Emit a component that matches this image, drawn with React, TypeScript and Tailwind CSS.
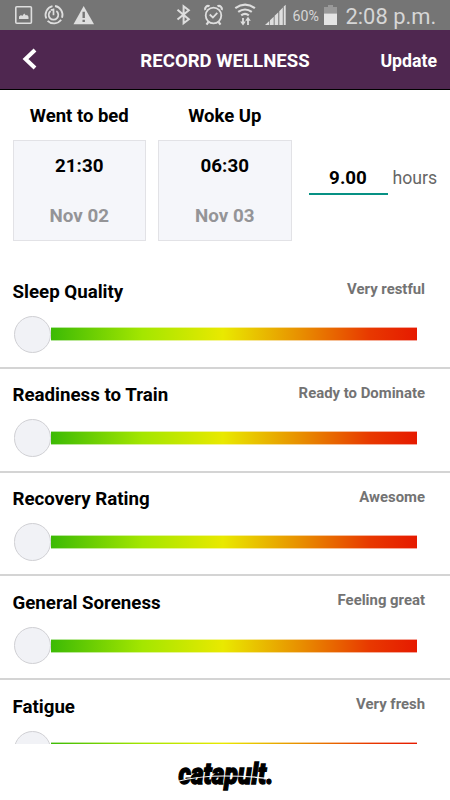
import { useState } from "react";

type Metric = {
  name: string;
  label: string;
};

const metrics: Metric[] = [
  { name: "Sleep Quality", label: "Very restful" },
  { name: "Readiness to Train", label: "Ready to Dominate" },
  { name: "Recovery Rating", label: "Awesome" },
  { name: "General Soreness", label: "Feeling great" },
  { name: "Fatigue", label: "Very fresh" },
];

export default function App() {
  const [hours, setHours] = useState("9.00");

  return (
    <div className="flex h-[800px] w-[450px] flex-col overflow-hidden bg-white font-['Roboto',sans-serif] text-black">
      <StatusBar />

      <header className="grid h-[60px] shrink-0 grid-cols-[100px_1fr_100px] items-center border-b border-black bg-[#4f2750] pb-px pt-[3px] text-white">
        <button type="button" aria-label="Back" className="pb-[3px] pl-[22px]">
          <svg width="16" height="22" viewBox="0 0 16 22" fill="none" stroke="currentColor" strokeWidth="4">
            <path d="M13 2 3.5 11 13 20" />
          </svg>
        </button>
        <h1 className="whitespace-nowrap text-center text-[18.6px] font-bold leading-6">RECORD WELLNESS</h1>
        <button type="button" className="pr-[13px] text-right text-[17.7px] font-bold leading-6">
          Update
        </button>
      </header>

      <main className="min-h-0 flex-1 overflow-hidden">
        <section className="flex h-[175px] px-[12.5px] pt-3.5">
          <TimeCard title="Went to bed" time="21:30" date="Nov 02" />
          <div className="w-3 shrink-0" />
          <TimeCard title="Woke Up" time="06:30" date="Nov 03" />
          <div className="flex flex-1 items-start pl-[17px] pt-[62px]">
            <input
              aria-label="Hours slept"
              value={hours}
              onChange={(e) => setHours(e.target.value)}
              className="h-[29px] w-[79px] border-b-2 border-[#079184] pb-1 text-center text-[18.8px] font-bold leading-6 outline-none"
            />
            <span className="pl-[5px] text-[17.7px] leading-6 text-[#666]">hours</span>
          </div>
        </section>

        {metrics.map((metric) => (
          <MetricRow key={metric.name} {...metric} />
        ))}
      </main>

      <footer className="flex h-14 shrink-0 justify-center bg-white pt-2">
        <Logo />
      </footer>
    </div>
  );
}

function TimeCard({ title, time, date }: { title: string; time: string; date: string }) {
  return (
    <div className="w-[133.5px] shrink-0 text-center text-[18.5px] font-bold leading-6">
      <h2>{title}</h2>
      <button
        type="button"
        className="mt-3 flex h-[100.5px] w-full flex-col items-center border border-[#e2e2e6] bg-[#f5f6fa] pt-[13px] text-[18.8px]"
      >
        <span>{time}</span>
        <span className="mt-[26px] text-[#949497]">{date}</span>
      </button>
    </div>
  );
}

function MetricRow({ name, label }: Metric) {
  return (
    <section className="h-[103.75px] border-b-2 border-[#d4d4d4] pt-3.5">
      <div className="flex justify-between pl-[12.5px] pr-[25px]">
        <h2 className="pt-[0.5px] text-[18.7px] font-bold leading-6">{name}</h2>
        <span className="text-[14.9px] font-bold leading-[21px] text-[#737373]">{label}</span>
      </div>
      <div className="mt-3 flex items-center pl-[13.5px]">
        <div className="size-[37.5px] rounded-full border border-[#d0d0d4] bg-[#f1f2f6]" />
        <div className="h-[14px] w-[366px] border-y border-white/60 bg-[linear-gradient(90deg,#3cba05_0%,#a4e600_25%,#e9e900_47%,#e88b00_69%,#e83900_87%,#e61a00_100%)] bg-origin-border" />
      </div>
    </section>
  );
}

function StatusBar() {
  return (
    <div className="flex h-[30px] shrink-0 items-center bg-[#757575] text-[#dedede]">
      <svg width="300" height="30" viewBox="0 0 300 30" fill="none" stroke="currentColor" strokeWidth="1.6">
        {/* picture */}
        <rect x="15.8" y="6.8" width="15.6" height="16.4" rx="1" />
        <path d="M19 19v-2.5l2-1.5 1.2 1 2-2.5 1.8 2 1-.8 1.5 2V19z" fill="currentColor" stroke="none" />
        {/* data saver */}
        <path d="M52.5 6.2a9 9 0 0 0-6.2 12.3M47.6 20.8a9 9 0 0 0 13.6-1M62 17.8a9 9 0 0 0-7-11.8" strokeWidth="1.8" />
        <path d="M50.6 11a4.8 4.8 0 1 0 5.8 0M53.5 8.5v6.8M50.8 9.8h3.5" strokeWidth="1.7" />
        {/* warning */}
        <path d="M83.7 6 94 24.2H73.5z" fill="currentColor" stroke="none" />
        <path d="M83.7 11.8v6.2M83.7 19.8v2.2" stroke="#757575" strokeWidth="2.4" />
        {/* bluetooth */}
        <path d="m177.5 9.8 11.3 9.4-5.2 4V6.2l5.2 4-11.3 9.4" strokeWidth="2" />
        {/* alarm */}
        <circle cx="213.5" cy="15.5" r="7.8" strokeWidth="1.8" />
        <path d="m209.7 14.5 3.2 3 4.4-4.6" strokeWidth="1.8" />
        <path d="M205.3 10a3 3 0 0 1 4.2-3.7M217.5 6.3a3 3 0 0 1 4.2 3.7M208.5 21.8l-2 2.8M218.5 21.8l2 2.8" strokeWidth="2.2" />
        {/* wifi */}
        <path d="M235.3 8.2q9.8-7 19.6 0M238.2 11.9q6.8-4.8 13.6 0M241.2 15.3q3.8-2.8 7.6 0" strokeWidth="2.2" />
        <path d="M243 18v5M248 25v-5" strokeWidth="1.8" />
        <path d="m240.2 21.5 2.8 4 2.8-4zM245.2 20.7l2.8-4 2.8 4z" fill="currentColor" stroke="none" />
        {/* signal */}
        <path
          d="M265 25l4.3-4V25zM270 20.2l3.7-3.5V25H270zM274.6 15.8l3.7-3.5V25h-3.7zM279.3 11.2l3.5-3.7V25h-3.5zM283.7 6.6l2-1.8V25h-2z"
          fill="currentColor"
          stroke="none"
        />
      </svg>
      <span className="-ml-[7.5px] w-[31.5px] pt-0.5 text-[14.2px] leading-5 text-[#d6d6d6]">60%</span>
      <svg width="13" height="30" viewBox="0 0 13 30">
        <path d="M4 5h5v2h4v6.5H0V7h4z" fill="#999" />
        <path d="M0 13.5h13V25H0z" fill="#e4e4e4" />
      </svg>
      <span className="whitespace-nowrap pl-[8.5px] pt-[3px] text-[21.9px] leading-[30px] text-[#d6d6d6]">2:08 p.m.</span>
    </div>
  );
}

function Logo() {
  return (
    <svg width="98" height="46" viewBox="0 0 98 46" aria-label="catapult." className="overflow-visible">
      <text
        x="2.5"
        y="32"
        textLength="95"
        lengthAdjust="spacingAndGlyphs"
        fontFamily="Roboto, sans-serif"
        fontSize="29"
        fontWeight="900"
        fontStyle="italic"
        stroke="#000"
        strokeWidth="1.3"
      >
        catapult.
      </text>
      <path d="M1 29.5Q22 24 48 24T92 26.5" fill="none" stroke="#fff" strokeWidth="1.2" />
    </svg>
  );
}
